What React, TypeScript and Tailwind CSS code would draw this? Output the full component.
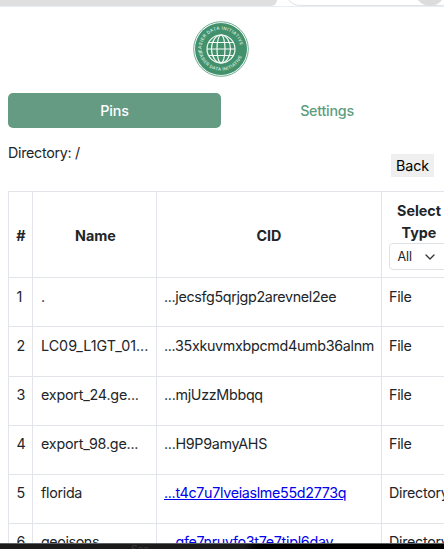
import React from "react";

type Row = { name: string; cid: string; type: string; link?: boolean; h: string; pad: string; nameGap: string; cidGap: string };

const rows: Row[] = [
  { name: ".", cid: "...jecsfg5qrjgp2arevnel2ee", type: "File", h: "h-[49px]", pad: "[&_td]:pt-2", nameGap: "", cidGap: "tracking-[-0.34px]" },
  { name: "LC09_L1GT_01...", cid: "...35xkuvmxbpcmd4umb36alnm", type: "File", h: "h-[50px]", pad: "[&_td]:pt-2", nameGap: "tracking-[0px]", cidGap: "tracking-[-0.31px]" },
  { name: "export_24.ge...", cid: "...mjUzzMbbqq", type: "File", h: "h-[49px]", pad: "[&_td]:pt-[7px]", nameGap: "tracking-[-0.2px]", cidGap: "tracking-[-0.3px]" },
  { name: "export_98.ge...", cid: "...H9P9amyAHS", type: "File", h: "h-[49px]", pad: "[&_td]:pt-[7px]", nameGap: "tracking-[-0.2px]", cidGap: "tracking-[-0.3px]" },
  { name: "florida", cid: "...t4c7u7lveiaslme55d2773q", type: "Directory", link: true, h: "h-[49px]", pad: "[&_td]:pt-[7px]", nameGap: "tracking-[-0.3px]", cidGap: "tracking-[-0.32px]" },
  { name: "geojsons", cid: "...gfe7nruyfo3t7e7tjpl6day", type: "Directory", link: true, h: "h-[49px]", pad: "[&_td]:pt-[7px]", nameGap: "tracking-[-0.4px]", cidGap: "tracking-[-0.3px]" },
];

function Logo() {
  return (
    <svg width="56" height="56" viewBox="0 0 56 56" className="block">
      <defs>
        <path id="top-arc" d="M8.6 31 A19.6 19.6 0 1 1 47.4 31" />
        <path id="bottom-arc" d="M6 31 A22.3 22.3 0 0 0 50 31" />
      </defs>
      <circle cx="28" cy="28" r="27.3" fill="#fff" stroke="#5fa587" strokeWidth="0.9" />
      <circle cx="28" cy="28" r="26" fill="#42916c" />
      <g fill="#cfe5da" fontFamily="Inter, sans-serif" fontSize="4.4" fontWeight="600">
        <text><textPath href="#top-arc" textLength="60">EASIER DATA INITIATIVE</textPath></text>
        <text><textPath href="#bottom-arc" textLength="58">EASIER DATA INITIATIVE</textPath></text>
      </g>
      <g fill="none" stroke="#f3faf6" strokeWidth="1.2">
        <circle cx="28" cy="28" r="14" />
        <ellipse cx="28" cy="28" rx="9.5" ry="14" />
        <ellipse cx="28" cy="28" rx="4" ry="14" />
        <path d="M16 21.5h24M14 28h28M16 34.5h24" />
      </g>
    </svg>
  );
}

function BrowserEdge() {
  return (
    <div className="flex h-[7px] items-start overflow-hidden border-b border-[#e8eef2] bg-white">
      <div className="h-[6px] w-[277px] shrink-0 rounded-br-[10px] bg-[#dfdfdf]" />
      <svg width="167" height="6" viewBox="0 0 167 6" className="shrink-0">
        <path d="M11 -1Q15 5.5 24 5.5H167" fill="none" stroke="#dfe3e3" />
        <circle cx="153" cy="-9" r="15" fill="#dcdcdc" />
      </svg>
    </div>
  );
}

export default function App() {
  return (
    <div className="flex h-[550px] w-[444px] flex-col overflow-hidden bg-white font-['Inter','Liberation_Sans',sans-serif] text-[14.3px] leading-[21.5px] text-[#212529]">
      <BrowserEdge />
      <main className="h-[536px] shrink-0 overflow-hidden pl-2">
        <header className="flex justify-center pt-[14px] pr-[11px]">
          <Logo />
        </header>
        <nav className="mt-4 flex h-[35px]">
          <button className="w-[213px] rounded-[5px] bg-[#659b83] text-center font-medium tracking-[-0.2px] text-white">Pins</button>
          <button className="w-[212px] text-center font-medium tracking-[-0.25px] text-[#5d9d81]">Settings</button>
        </nav>
        <div className="flex h-[63px] justify-between pt-[14px] pr-[10px]">
          <p className="tracking-[-0.3px]">Directory: /</p>
          <button className="mt-3 h-[23px] w-[43px] bg-[#efefef] tracking-[-0.15px] text-black">Back</button>
        </div>
        <table className="w-[447px] table-fixed border-collapse [&_td]:border [&_td]:border-[#e1e4e8] [&_th]:border [&_th]:border-[#e1e4e8]">
          <colgroup>
            <col className="w-[24px]" />
            <col className="w-[124px]" />
            <col className="w-[225px]" />
            <col className="w-[74px]" />
          </colgroup>
          <thead>
            <tr className="h-[86px]">
              <th className="pt-[2px] pl-px">#</th>
              <th className="pt-[2px] pl-[2px]">Name</th>
              <th className="pt-[2px]">CID</th>
              <th className="p-0 align-top">
                <div className="pt-2 pr-[7px] pl-2">Select Type</div>
                <div className="ml-[7px] flex h-[27px] w-[66px] items-center rounded-[4px] border border-[#dee2e6] pl-[7.5px] text-[12.5px] font-normal">
                  <span className="tracking-[-0.1px]">All</span>
                  <svg width="12" height="12" viewBox="0 0 12 12" className="ml-[12px]">
                    <path d="M2 4l4 4 4-4" fill="none" stroke="#343a40" strokeWidth="1.4" strokeLinecap="round" strokeLinejoin="round" />
                  </svg>
                </div>
              </th>
            </tr>
          </thead>
          <tbody>
            {rows.map((r, i) => (
              <tr key={r.name} className={`${r.h} ${r.pad} align-top whitespace-nowrap`}>
                <td className="pl-[7.5px]">{i + 1}</td>
                <td className={`pl-2 ${r.nameGap}`}>{r.name}</td>
                <td className={`pl-[7px] ${r.cidGap}`}>
                  {r.link ? <a className="text-[#0000ee] underline">{r.cid}</a> : r.cid}
                </td>
                <td className="pl-[7px] tracking-[-0.3px]">{r.type}</td>
              </tr>
            ))}
          </tbody>
        </table>
      </main>
      <footer className="h-[6px] shrink-0 overflow-hidden border-t border-[#5c6163] bg-linear-to-r from-[#1b1b1b] from-55% to-black to-60% pl-[131px] text-[10px] leading-[10px] text-[#3c3c3c]">
        Sea
      </footer>
      <div className="h-px shrink-0 bg-white" />
    </div>
  );
}
